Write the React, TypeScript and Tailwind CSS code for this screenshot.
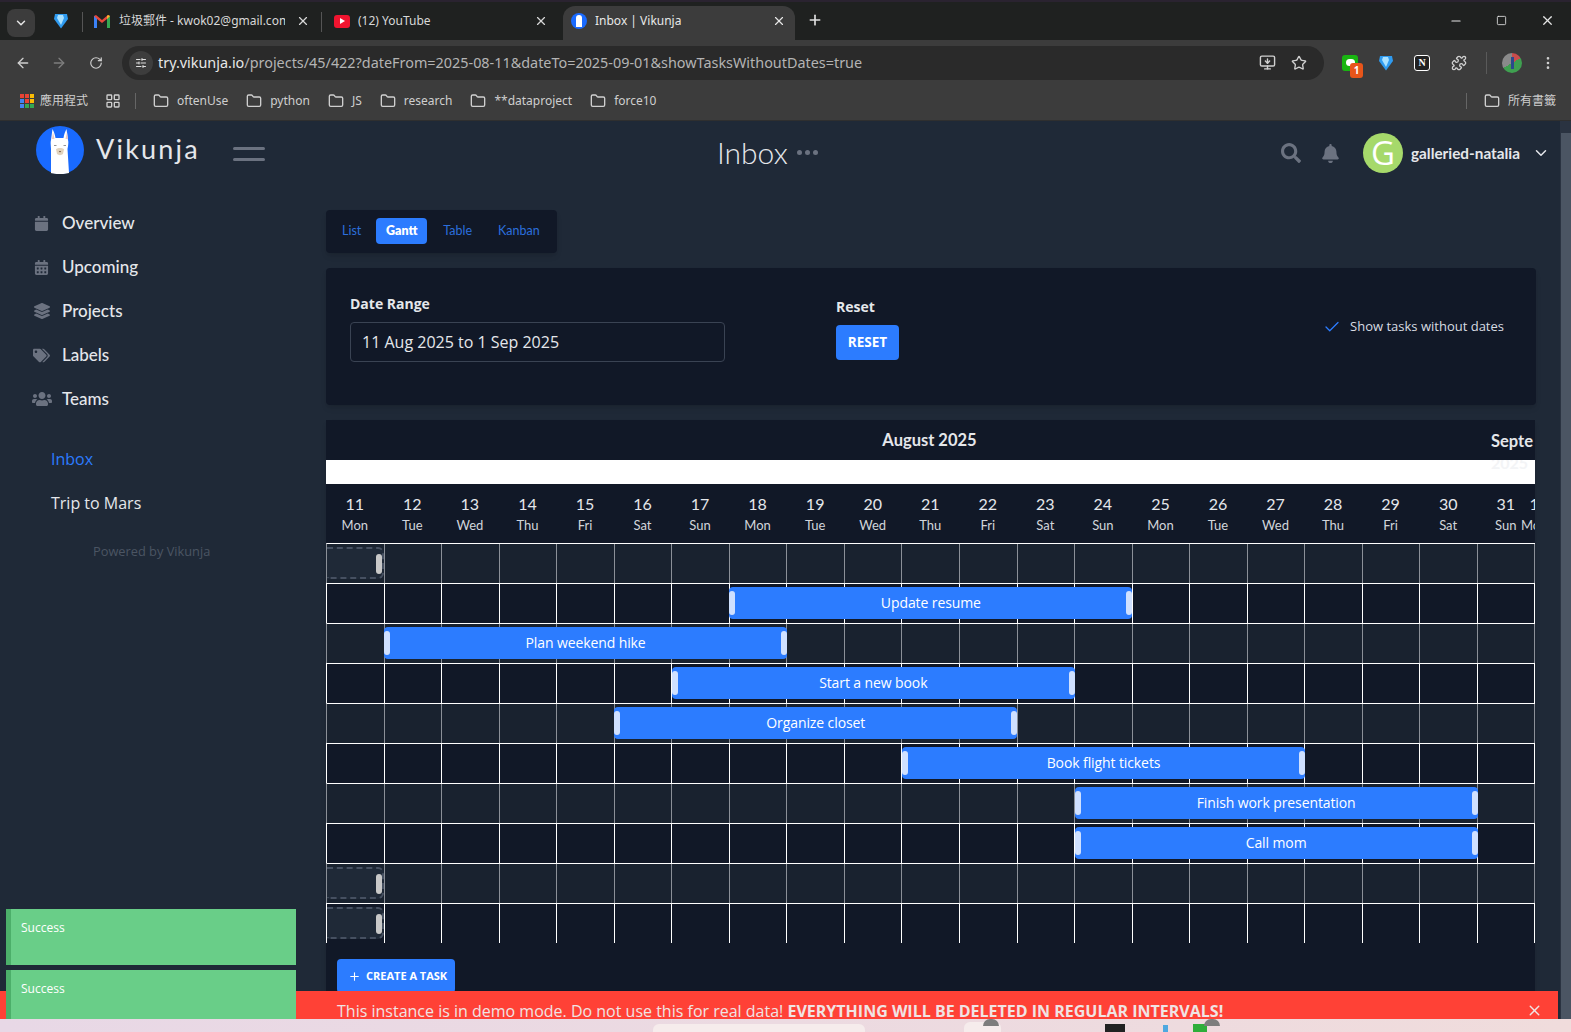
import React from 'react';
import {
  ArrowLeft,
  ArrowRight,
  RotateCw,
  ChevronDown,
  X,
  Plus,
  Minus,
  Square,
  Star,
  Folder,
  EllipsisVertical,
  Puzzle,
  MonitorDown,
  SlidersHorizontal,
  LayoutGrid,
  Check,
} from 'lucide-react';
import { FaCalendar, FaCalendarAlt, FaLayerGroup, FaTags, FaUsers, FaSearch, FaBell } from 'react-icons/fa';

const days = [
  [11, 'Mon'], [12, 'Tue'], [13, 'Wed'], [14, 'Thu'], [15, 'Fri'], [16, 'Sat'], [17, 'Sun'],
  [18, 'Mon'], [19, 'Tue'], [20, 'Wed'], [21, 'Thu'], [22, 'Fri'], [23, 'Sat'], [24, 'Sun'],
  [25, 'Mon'], [26, 'Tue'], [27, 'Wed'], [28, 'Thu'], [29, 'Fri'], [30, 'Sat'], [31, 'Sun'],
] as const;

const rows: { title?: string; start?: number }[] = [
  {},
  { title: 'Update resume', start: 7 },
  { title: 'Plan weekend hike', start: 1 },
  { title: 'Start a new book', start: 6 },
  { title: 'Organize closet', start: 5 },
  { title: 'Book flight tickets', start: 10 },
  { title: 'Finish work presentation', start: 13 },
  { title: 'Call mom', start: 13 },
  {},
  {},
];

const COL = 57.55;

const navItems = [
  { label: 'Overview', icon: FaCalendar, size: 15 },
  { label: 'Upcoming', icon: FaCalendarAlt, size: 15 },
  { label: 'Projects', icon: FaLayerGroup, size: 16 },
  { label: 'Labels', icon: FaTags, size: 17 },
  { label: 'Teams', icon: FaUsers, size: 20 },
];

const bookmarks = ['oftenUse', 'python', 'JS', 'research', '**dataproject', 'force10'];

function DropIcon({ size = 16 }: { size?: number }) {
  return (
    <svg width={size} height={size} viewBox="0 0 16 16">
      <path d="M2 1h12l1 5-7 9.500L1 6z" fill="#2f9bf0" />
      <path d="M5 2h5l1 3-3 7-4-7z" fill="#a9e1ff" />
    </svg>
  );
}

function LlamaLogo() {
  return (
    <svg width="48" height="48" viewBox="0 0 48 48" className="shrink-0">
      <circle cx="24" cy="24" r="24" fill="#196aff" />
      <path
        d="M15 47V23c0-3-.8-6 0-9l1.500-11c1 2 2.500 5 3 9h8c.5-4 2-7 3-9l1.500 11c.8 3 0 6-.5 9l1.500 24c-5 1.500-13 1.500-18.500 0z"
        fill="#ffffff"
      />
      <path d="M17 6l1.500 7h-2.500zM31 6l1 7h-2.500z" fill="#e8c9c4" />
      <path d="M20 23c2-1.500 6-1.500 8 0l-1 5c-1.500 1.500-4.500 1.500-6 0z" fill="#e2d3bd" />
      <path d="M22.800 25h2.400l-1.200 1.500z" fill="#6b4f3a" />
      <path d="M18 19.500h2.500M27.500 19.500H30" stroke="#777" strokeWidth="0.8" />
    </svg>
  );
}

function ChromeBar() {
  return (
    <div className="shrink-0 font-['Noto_Sans','Noto_Sans_CJK_TC',sans-serif] text-[12px] text-[#d8d8d8]">
      {/* tabs */}
      <div className="h-[40px] bg-[#1f2120] border-t-2 border-[#2a2330] flex items-end pl-[7px]">
        <div className="w-[28px] h-[28px] mb-[3px] rounded-lg bg-[#3c3c3c] flex items-center justify-center">
          <ChevronDown size={14} color="#e5e5e5" strokeWidth={2.5} />
        </div>
        <div className="w-[47px] h-[34px] flex items-center pl-[18px] pb-[4px]">
          <DropIcon />
        </div>
        <div className="w-px h-[20px] mb-[8px] bg-[#555]" />
        <div className="w-[238px] h-[34px] flex items-center pl-[11px] pr-[11px] pb-[4px]">
          <svg width="16" height="14" viewBox="0 0 16 14" className="shrink-0">
            <path d="M0 2v12h3V5l5 4 5-4v9h3V2l-2-1-6 5-6-5z" fill="#e8483c" />
            <path d="M0 2v12h3V5z" fill="#3b82f6" />
            <path d="M13 5v9h3V2z" fill="#34a853" />
            <path d="M13 5V2l1-1 2 1z" fill="#f7bb2a" />
          </svg>
          <span className="ml-[9px] w-[166px] overflow-hidden whitespace-nowrap">垃圾郵件 - kwok02@gmail.com</span>
          <X size={14} className="ml-auto shrink-0" />
        </div>
        <div className="w-px h-[20px] mb-[8px] bg-[#555]" />
        <div className="w-[241px] h-[34px] flex items-center pl-[12px] pr-[15px] pb-[4px]">
          <div className="w-[16px] h-[13px] rounded-[3px] bg-[#f0142f] flex items-center justify-center shrink-0">
            <div className="w-0 h-0 border-y-[3px] border-y-transparent border-l-[5px] border-l-white" />
          </div>
          <span className="ml-[8px]">(12) YouTube</span>
          <X size={14} className="ml-auto" />
        </div>
        <div className="w-[232px] h-[34px] rounded-t-xl bg-[#3c3c3c] flex items-center pl-[8px] pr-[9px] pb-[4px] text-[#e8e8e8]">
          <div className="w-[16px] h-[16px] rounded-full bg-[#196aff] flex items-center justify-center shrink-0">
            <div className="w-[6px] h-[12px] bg-white rounded-t-sm" />
          </div>
          <span className="ml-[8px]">Inbox | Vikunja</span>
          <X size={14} className="ml-auto" />
        </div>
        <Plus size={16} className="ml-[12px] mb-[12px]" color="#e0e0e0" strokeWidth={2.5} />
        <div className="ml-auto flex items-center gap-[33px] pr-[16px] mb-[12px] text-[#e5e5e5]">
          <Minus size={14} />
          <Square size={11} strokeWidth={1.8} />
          <X size={15} />
        </div>
      </div>
      {/* address bar */}
      <div className="h-[40px] bg-[#3c3c3c] flex items-center pl-[15px] pt-[5px] text-[#cfcfcf]">
        <ArrowLeft size={16} />
        <ArrowRight size={16} color="#7d7d7d" className="ml-[20px]" />
        <RotateCw size={14} className="ml-[22px]" />
        <div className="ml-[19px] w-[1202px] h-[34px] rounded-full bg-[#2a2a2a] flex items-center pl-[7px] pr-[17px]">
          <div className="w-[24px] h-[24px] rounded-full bg-[#3d3d3d] flex items-center justify-center">
            <SlidersHorizontal size={12} color="#e0e0e0" />
          </div>
          <span className="ml-[5px] text-[14.4px] text-[#b4b4b4] whitespace-nowrap">
            <span className="text-[#e8e8e8]">try.vikunja.io</span>/projects/45/422?dateFrom=2025-08-11&amp;dateTo=2025-09-01&amp;showTasksWithoutDates=true
          </span>
          <MonitorDown size={17} className="ml-auto" color="#d0d0d0" />
          <Star size={16} className="ml-[15px]" color="#d0d0d0" />
        </div>
        <div className="ml-[18px] relative w-[16px] h-[16px] rounded-[3px] bg-[#19b511] flex items-center justify-center">
          <div className="w-[9px] h-[7px] rounded-full bg-white" />
          <div className="absolute left-[8px] top-[8px] w-[13px] h-[15px] rounded-[3px] bg-[#e8551a] text-white text-[10px] font-bold leading-[15px] text-center">1</div>
        </div>
        <div className="ml-[20px]"><DropIcon /></div>
        <div className="ml-[20px] w-[16px] h-[16px] rounded-[3px] bg-[#222] border border-white text-white text-[10px] font-bold leading-[14px] text-center font-['Liberation_Serif',serif]">N</div>
        <Puzzle size={16} className="ml-[21px]" color="#d0d0d0" />
        <div className="ml-[19px] w-px h-[22px] bg-[#5a5a5a]" />
        <div className="ml-[15px] w-[20px] h-[20px] rounded-full bg-[conic-gradient(#c94c4c_0deg_60deg,#3fa050_60deg_180deg,#3fa050_180deg_240deg,#8a8a8a_240deg_360deg)] flex items-center justify-center">
          <div className="w-[3px] h-[12px] bg-[#2b4a8c]" />
        </div>
        <EllipsisVertical size={16} className="ml-[18px]" color="#d0d0d0" />
      </div>
      {/* bookmarks */}
      <div className="h-[41px] bg-[#3c3c3c] border-b border-[#2f2f2f] flex items-center pl-[20px] pt-[2px] text-[12px] text-[#cfcfcf]">
        <div className="w-[14px] h-[14px] grid grid-cols-3 gap-px">
          {['#ea4335', '#ea4335', '#fbbc04', '#4285f4', '#ea4335', '#fbbc04', '#4285f4', '#34a853', '#34a853'].map((c, i) => (
            <div key={i} style={{ background: c }} />
          ))}
        </div>
        <span className="ml-[6px]">應用程式</span>
        <LayoutGrid size={16} className="ml-[17px]" />
        <div className="ml-[14px] w-px h-[16px] bg-[#666]" />
        <div className="ml-[17px] flex items-center gap-[18px]">
          {bookmarks.map(b => (
            <div key={b} className="flex items-center gap-[8px]">
              <Folder size={16} />
              <span>{b}</span>
            </div>
          ))}
        </div>
        <div className="ml-auto w-px h-[16px] bg-[#666]" />
        <div className="ml-[17px] mr-[15px] flex items-center gap-[8px]">
          <Folder size={16} />
          <span>所有書籤</span>
        </div>
      </div>
    </div>
  );
}

function Sidebar() {
  return (
    <aside className="w-[326px] shrink-0 font-['Lato',sans-serif]">
      <div className="h-[66px] pl-[36px] pt-[5px] flex items-start">
        <LlamaLogo />
        <span className="ml-[12px] mt-[5px] text-[27px] leading-[36px] tracking-[2.2px] text-[#e5e7eb]">Vikunja</span>
        <div className="ml-[33px] mt-[21px] w-[32px] flex flex-col gap-[8px]">
          <div className="h-[3px] rounded-full bg-[#6b7280]" />
          <div className="h-[3px] rounded-full bg-[#6b7280]" />
        </div>
      </div>
      <nav className="mt-[14px] flex flex-col">
        {navItems.map(({ label, icon: Icon, size }) => (
          <div key={label} className="h-[44px] flex items-center pl-[31px]">
            <span className="w-[21px] flex justify-center">
              <Icon size={size} color="#6b7280" />
            </span>
            <span className="ml-[10px] text-[17px] font-medium text-[#e5e7eb]">{label}</span>
          </div>
        ))}
      </nav>
      <div className="mt-[16px] pl-[51px] flex flex-col text-[16px] font-['Open_Sans',sans-serif]">
        <div className="h-[44px] flex items-center text-[#2c7cff]">Inbox</div>
        <div className="h-[44px] flex items-center text-[#e5e7eb]">Trip to Mars</div>
      </div>
      <div className="mt-[17px] pl-[93px] text-[12.8px] text-[#4b5563] font-['Open_Sans',sans-serif]">Powered by Vikunja</div>
    </aside>
  );
}

function Header() {
  return (
    <div className="h-[89px] relative flex items-start font-['Lato',sans-serif]">
      <div className="pl-[391px] pt-[11px] flex">
        <span className="text-[30px] leading-[40px] font-light text-[#e5e7eb]">Inbox</span>
        <div className="ml-[9px] mt-[18px] flex gap-[3px]">
          <div className="w-[5px] h-[5px] rounded-full bg-[#6b7280]" />
          <div className="w-[5px] h-[5px] rounded-full bg-[#6b7280]" />
          <div className="w-[5px] h-[5px] rounded-full bg-[#6b7280]" />
        </div>
      </div>
      <div className="absolute left-[955px] top-[12px] flex items-center">
        <FaSearch size={20} color="#6b7280" />
        <FaBell size={19} color="#6b7280" className="ml-[20px]" />
        <div className="ml-[23px] w-[40px] h-[40px] rounded-full bg-[#a6d96b] flex items-center justify-center text-white text-[33px] font-['Open_Sans',sans-serif]">G</div>
        <span className="ml-[8px] text-[15.3px] font-bold text-[#e5e7eb] whitespace-nowrap">galleried-natalia</span>
        <ChevronDown size={18} color="#e5e7eb" className="ml-[12px]" />
      </div>
    </div>
  );
}

function ViewTabs() {
  return (
    <div className="h-[43px] w-[231px] rounded bg-[#111827] shadow-md flex items-center pl-[6px] pb-[1px] text-[12.5px] text-[#2c6fdc] font-['Lato',sans-serif]">
      <span className="px-[10px]">List</span>
      <span className="h-[26px] w-[51px] ml-[5px] rounded bg-[#2c7cff] text-white font-extrabold flex items-center justify-center">Gantt</span>
      <span className="ml-[16px]">Table</span>
      <span className="ml-[26px]">Kanban</span>
    </div>
  );
}

function FilterPanel() {
  return (
    <div className="mt-[15px] w-[1210px] h-[137px] rounded bg-[#111827] shadow-md flex font-['Open_Sans',sans-serif] text-[#e5e7eb]">
      <div className="ml-[24px] pt-[26px]">
        <div className="text-[14px] font-bold leading-[20px]">Date Range</div>
        <div className="mt-[8px] w-[375px] h-[40px] rounded border border-[#3a4353] flex items-center pl-[11px] text-[16px]">
          11 Aug 2025 to 1 Sep 2025
        </div>
      </div>
      <div className="ml-[111px] pt-[29px]">
        <div className="text-[14px] font-bold leading-[20px]">Reset</div>
        <div className="mt-[8px] w-[63px] h-[35px] rounded bg-[#2c7cff] text-white text-[13.5px] font-bold flex items-center justify-center">RESET</div>
      </div>
      <div className="ml-auto mr-[32px] pt-[49px] h-fit flex items-center text-[13px] text-[#d8dce3]">
        <Check size={18} color="#2c7cff" strokeWidth={1.7} />
        <span className="ml-[9px]">Show tasks without dates</span>
      </div>
    </div>
  );
}

function GanttRow({ index, title, start }: { index: number; title?: string; start?: number }) {
  const odd = index % 2 === 0;
  return (
    <div
      className={
        odd
          ? 'relative h-[40px] border-t border-white grid grid-cols-[repeat(21,57.55px)] bg-[#19222f] border-l border-l-[#8b9098]'
          : 'relative h-[40px] border-t border-white grid grid-cols-[repeat(21,57.55px)] bg-[#111827] border-l border-l-white'
      }
    >
      {days.map(([d]) => (
        <div key={d} className={odd ? 'border-r border-[#8b9098]' : 'border-r border-white'} />
      ))}
      {title ? (
        <div
          className="absolute top-[3px] h-[32px] w-[403px] rounded bg-[#2c7cff] flex items-center justify-center text-[14px] tracking-[-0.1px] pb-[2px] text-white font-['Open_Sans',sans-serif]"
          style={{ left: (start ?? 0) * COL - 0.5 }}
        >
          {title}
          <div className="absolute left-0 top-[4px] w-[6px] h-[24px] rounded-full bg-[#cfe0ff]" />
          <div className="absolute right-0 top-[4px] w-[6px] h-[24px] rounded-full bg-[#cfe0ff]" />
        </div>
      ) : (
        <div className="absolute left-0 top-[3px] h-[32px] w-[57px] rounded-r-md bg-[#1f2937] border-y-2 border-r-2 border-dashed border-[#465061]">
          <div className="absolute right-0 top-[5px] w-[6px] h-[20px] rounded-full bg-[#c8c8c8]" />
        </div>
      )}
    </div>
  );
}

function Gantt() {
  return (
    <div className="mt-[15px] w-[1209px] bg-[#111827] shadow-md font-['Lato',sans-serif] text-[#e5e7eb] overflow-hidden">
      <div className="h-[40px] relative flex items-center justify-center text-[16.5px] font-bold pr-[2px]">
        August 2025
        <span className="absolute left-[1165px] top-[9px] whitespace-nowrap">Septe</span>
      </div>
      <div className="h-[24px] bg-white relative overflow-hidden">
        <span className="absolute left-[1165px] top-[-9px] text-[16px] font-bold text-[#f3f4f6]">2025</span>
      </div>
      <div className="h-[59px] flex overflow-hidden">
        {days.map(([d, w]) => (
          <div key={d} className="w-[57.55px] shrink-0 flex flex-col items-center pt-[10px]">
            <span className="text-[16px] leading-[20px]">{d}</span>
            <span className="text-[13px] leading-[22px] text-[#d1d5db]">{w}</span>
          </div>
        ))}
        <div className="-ml-[29px] w-[57.5px] shrink-0 flex flex-col items-center pt-[10px]">
          <span className="text-[16px] leading-[20px]">1</span>
          <span className="text-[13px] leading-[22px] text-[#d1d5db]">Mon</span>
        </div>
      </div>
      <div className="overflow-hidden">
        {rows.map((r, i) => (
          <GanttRow key={i} index={i} title={r.title} start={r.start} />
        ))}
      </div>
      <div className="h-[76px] pt-[16px] pl-[11px]">
        <div className="w-[118px] h-[34px] rounded bg-[#2c7cff] flex items-center pl-[11px] text-[11px] font-bold text-white font-['Open_Sans',sans-serif] whitespace-nowrap">
          <Plus size={13} />
          <span className="ml-[5px]">CREATE A TASK</span>
        </div>
      </div>
    </div>
  );
}

function Toasts() {
  return (
    <div className="absolute left-[6px] bottom-0 w-[290px] h-[110px] overflow-hidden flex flex-col gap-[5px] font-['Open_Sans',sans-serif]">
      {[0, 1].map(i => (
        <div key={i} className="h-[56px] shrink-0 bg-[#69ce88] border-l-[5px] border-[#4caf6a] pl-[10px] pt-[10px] text-[12px] text-white">
          Success
        </div>
      ))}
    </div>
  );
}

function DemoBanner() {
  return (
    <div className="absolute left-0 right-[13px] bottom-0 h-[28px] bg-[#ff4136] flex items-start pl-[337px] text-[16px] text-[#f0e4e4] font-['Open_Sans',sans-serif] whitespace-nowrap">
      <span className="mt-[9px] leading-[22px]">
        This instance is in demo mode. Do not use this for real data! <b>EVERYTHING WILL BE DELETED IN REGULAR INTERVALS!</b>
      </span>
      <X size={17} className="ml-auto mr-[15px] mt-[11px]" />
    </div>
  );
}

export default function App() {
  return (
    <div className="w-[1571px] h-[1032px] overflow-hidden flex flex-col bg-[#1f2937]">
      <ChromeBar />
      <div className="flex-1 relative overflow-hidden flex min-h-0">
        <Sidebar />
        <main className="flex-1 min-w-0">
          <Header />
          <ViewTabs />
          <FilterPanel />
          <Gantt />
        </main>
        {/* page scrollbar */}
        <div className="w-[11px] shrink-0 bg-[#2a3341] flex justify-center pt-[12px]">
          <div className="w-[10px] h-full bg-[#4b5563]" />
        </div>
        <DemoBanner />
        <Toasts />
      </div>
      {/* desktop peeking out below the window */}
      <div className="h-[13px] shrink-0 relative bg-[linear-gradient(90deg,#e8d8e6,#f0dcdc)] overflow-hidden">
        <div className="absolute left-[653px] top-[5px] w-[212px] h-[12px] rounded-t-md bg-[#f6ecec]" />
        <div className="absolute left-[964px] top-[3px] w-[37px] h-[12px] rounded-t-md bg-[#f6ecec]" />
        <div className="absolute left-[983px] top-0 w-[16px] h-[7px] rounded-t-full bg-[#7d7d7d]" />
        <div className="absolute left-[1105px] top-[5px] w-[20px] h-[8px] bg-[#222]" />
        <div className="absolute left-[1163px] top-[6px] w-[5px] h-[8px] bg-[#4fa8e0]" />
        <div className="absolute left-[1193px] top-[5px] w-[14px] h-[8px] bg-[#2fae3a]" />
        <div className="absolute left-[1204px] top-0 w-[16px] h-[7px] rounded-t-full bg-[#7d7d7d]" />
      </div>
    </div>
  );
}
